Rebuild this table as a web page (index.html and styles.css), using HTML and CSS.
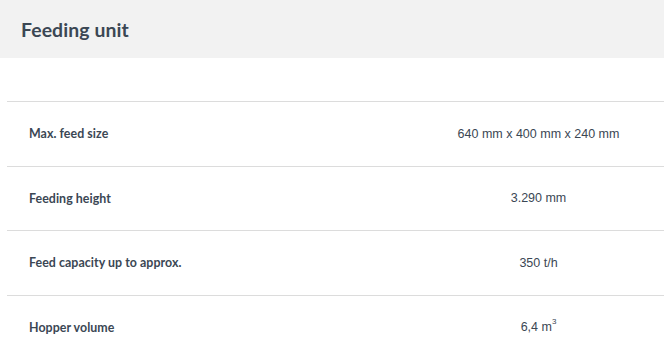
FILE: index.html
```html
<!DOCTYPE html>
<html>
<head>
<meta charset="utf-8">
<link rel="stylesheet" href="styles.css">
</head>
<body>
<div class="header"><h2 class="title">Feeding unit</h2></div>
<div class="spacer"></div>
<div class="table">
  <div class="row"><div class="label">Max. feed size</div><div class="value">640 mm x 400 mm x 240 mm</div></div>
  <div class="row"><div class="label">Feeding height</div><div class="value">3.290 mm</div></div>
  <div class="row"><div class="label">Feed capacity up to approx.</div><div class="value">350 t/h</div></div>
  <div class="row"><div class="label">Hopper volume</div><div class="value">6,4 m<sup class="sup">3</sup></div></div>
</div>
</body>
</html>
```
FILE: styles.css
```css
html, body { margin: 0; padding: 0; background: #fff; }
body { font-family: Lato, "Liberation Sans", sans-serif; color: #3b4754; }
.header { background: #f2f2f2; height: 58px; display: flex; align-items: center; padding-left: 21px; }
.title { margin: 0; font-size: 19.4px; font-weight: 700; letter-spacing: 0.1px; color: #3b4754; }
.spacer { height: 43px; }
.table { margin-left: 7px; }
.row { display: grid; grid-template-columns: 406px 1fr; height: 64.5px; align-items: center; border-top: 1px solid #dcdcdc; box-sizing: border-box; }
.label { padding-left: 22px; font-size: 12.4px; font-weight: 700; letter-spacing: 0.05px; }
.value { text-align: center; font-family: "Liberation Sans", Arial, sans-serif; font-size: 12.5px; }
.sup { font-size: 8px; vertical-align: top; position: relative; top: -3px; }
```
